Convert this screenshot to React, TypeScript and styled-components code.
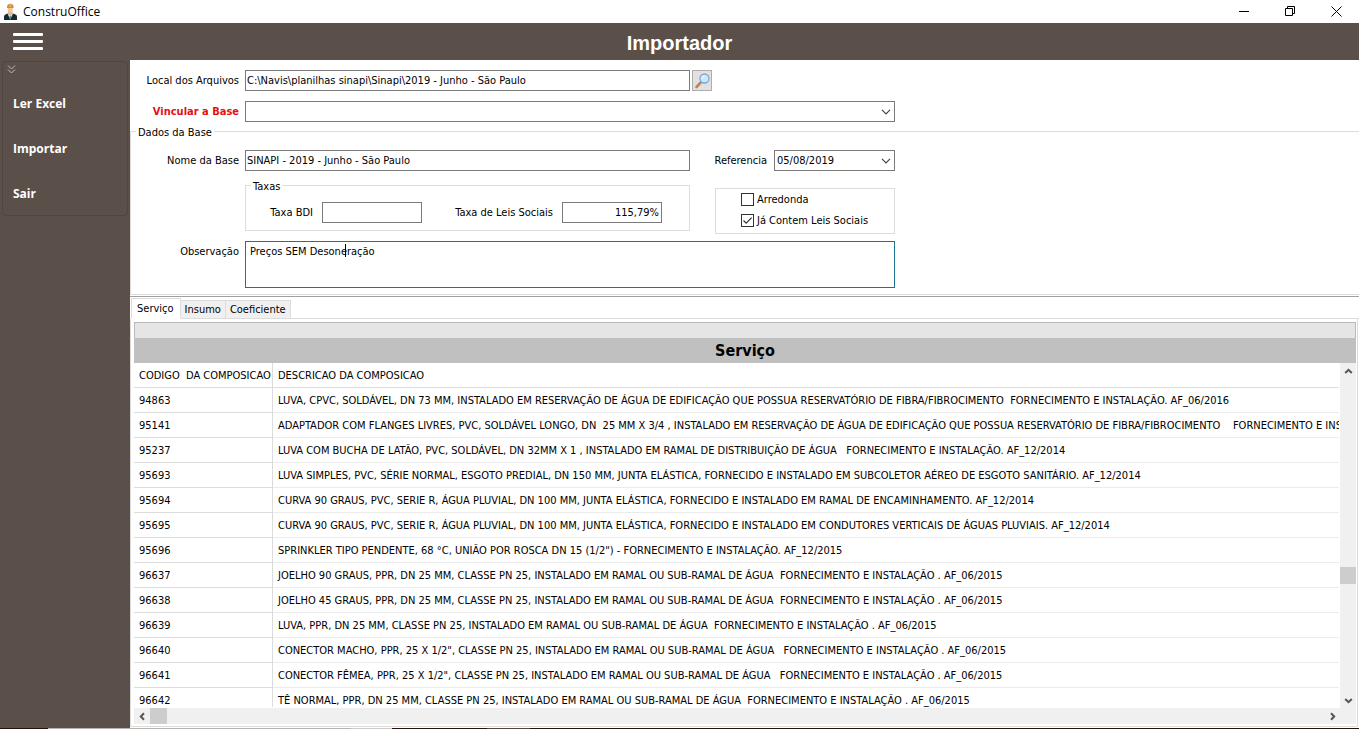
import React from "react";
import styled, { createGlobalStyle } from "styled-components";

const ui = `"DejaVu Sans Condensed", "DejaVu Sans", sans-serif`;
const system = `"Open Sans", "Noto Sans", sans-serif`;
const brown = "#5b4f4a";
const line = "#dcdcdc";

const Global = createGlobalStyle`
  *, *::before, *::after { box-sizing: border-box; }
  body { margin: 0; background: #fff; color: #000; font: 11px/14px ${ui}; }
  button, input, select, textarea { font: inherit; color: inherit; margin: 0; border-radius: 0; outline: none; }
`;

const Window = styled.div`
  display: flex;
  flex-direction: column;
  height: 100vh;
  overflow: hidden;
`;

const TitleBar = styled.header`
  display: flex;
  align-items: center;
  height: 23px;
  flex: none;
  padding-left: 2px;
  font: 12px/16px ${system};
`;

const AppName = styled.span`
  flex: 1;
  padding-left: 5px;
`;

const WindowButton = styled.button`
  display: grid;
  place-items: center;
  width: 46px;
  height: 21px;
  padding: 0;
  border: 0;
  background: none;
`;

const AppHeader = styled.div`
  display: grid;
  grid-template-columns: 130px 1fr 130px;
  align-items: center;
  height: 37px;
  flex: none;
  background: ${brown};
  color: #fff;
`;

const MenuButton = styled.button`
  width: 30px;
  height: 18px;
  margin-left: 13px;
  padding: 0;
  border: 0;
  background: none;
  svg { display: block; }
`;

const PageTitle = styled.h1`
  margin: 0;
  padding-top: 2px;
  text-align: center;
  font: bold 20px/24px "Liberation Sans", Arial, sans-serif;
`;

const Body = styled.div`
  display: flex;
  flex: 1;
  min-height: 0;
`;

const Sidebar = styled.aside`
  width: 130px;
  flex: none;
  padding: 1px 2px;
  background: ${brown};
`;

const SideNav = styled.nav`
  display: flex;
  flex-direction: column;
  height: 155px;
  padding: 3px 0 0 4px;
  border: 1px solid #50453f;
  border-radius: 4px;
`;

const Collapse = styled.button`
  width: 10px;
  height: 10px;
  padding: 0;
  border: 0;
  background: none;
  svg { display: block; }
`;

const NavItem = styled.button`
  height: 45px;
  padding: 0 0 0 6px;
  border: 0;
  background: none;
  color: #fff;
  text-align: left;
  font: bold 12px/16px ${system};
`;

const NavList = styled.div`
  display: flex;
  flex-direction: column;
  padding-top: 7px;
`;

const Main = styled.main`
  display: flex;
  flex-direction: column;
  flex: 1;
  min-width: 0;
`;

const Form = styled.form`
  display: flex;
  flex-direction: column;
  flex: none;
  padding-top: 10px;
`;

const Row = styled.div<{ $top?: number; $align?: string }>`
  display: grid;
  grid-template-columns: 109px 650px;
  column-gap: 6px;
  align-items: ${(p) => p.$align ?? "center"};
  margin-top: ${(p) => p.$top ?? 0}px;
`;

const Label = styled.label<{ $required?: boolean; $multiline?: boolean }>`
  padding-top: ${(p) => (p.$multiline ? 4 : 0)}px;
  text-align: right;
  white-space: nowrap;
  color: ${(p) => (p.$required ? "#e60f0f" : "inherit")};
  font-weight: ${(p) => (p.$required ? "bold" : "normal")};
`;

const Field = styled.div<{ $gap?: number; $align?: string }>`
  display: flex;
  align-items: ${(p) => p.$align ?? "center"};
  gap: ${(p) => p.$gap ?? 0}px;
`;

const TextInput = styled.input<{ $width: number; $right?: boolean }>`
  width: ${(p) => p.$width}px;
  height: 21px;
  padding: ${(p) => (p.$right ? "0 2px" : "0 1px")};
  border: 1px solid #7a7a7a;
  background: #fff;
  text-align: ${(p) => (p.$right ? "right" : "left")};
`;

const SearchButton = styled.button`
  display: grid;
  place-items: center;
  width: 20px;
  height: 21px;
  padding: 0;
  border: 1px solid #adadad;
  background: #e1e1e1;
`;

const SelectBox = styled.div<{ $width: number }>`
  display: grid;
  align-items: center;
  width: ${(p) => p.$width}px;
  > * { grid-area: 1 / 1; }
  svg { justify-self: end; margin-right: 4px; pointer-events: none; }
`;

const Select = styled.select`
  appearance: none;
  width: 100%;
  height: 21px;
  padding: 0 2px;
  border: 1px solid #7a7a7a;
  background: #fff;
`;

const Legend = styled.legend`
  margin-left: 5px;
  padding: 2px 2px 0;
  line-height: 11px;
`;

const BaseGroup = styled.fieldset`
  min-width: 0;
  margin: 3px 0 0;
  padding: 12px 0 6px;
  border: 1px solid ${line};
  border-right: 0;
  & > div { margin-left: -1px; }
`;

const RateGroup = styled.fieldset`
  display: flex;
  width: 445px;
  margin: 0;
  padding: 10px 0 7px;
  border: 1px solid ${line};
`;

const Pair = styled.div<{ $label: number; $gap?: number }>`
  display: grid;
  grid-template-columns: ${(p) => p.$label}px auto;
  column-gap: ${(p) => p.$gap ?? 9}px;
  align-items: center;
`;

const Options = styled.div`
  display: flex;
  flex-direction: column;
  gap: 7px;
  width: 180px;
  height: 46px;
  margin-top: 9px;
  padding: 4px 0 0 25px;
  border: 1px solid ${line};
`;

const Option = styled.label`
  display: flex;
  align-items: flex-start;
  gap: 3px;
  height: 14px;
`;

const CheckBox = styled.input`
  appearance: none;
  width: 13px;
  height: 13px;
  border: 1px solid #333;
  background: #fff;
  &:checked {
    background: url("data:image/svg+xml,%3Csvg xmlns='http://www.w3.org/2000/svg' viewBox='0 0 11 11'%3E%3Cpath d='M1.5 5.5 4.2 8.2 9.6 2.6' fill='none' stroke='%23333' stroke-width='1.2'/%3E%3C/svg%3E");
  }
`;

const NoteBox = styled.div`
  position: relative;
  height: 47px;
`;

const Note = styled.textarea`
  display: block;
  width: 100%;
  height: 100%;
  padding: 3px 4px;
  border: 1px solid #1a7595;
  background: #fff;
  resize: none;
`;

const TextCursor = styled.span`
  position: absolute;
  left: 100px;
  top: 3px;
  width: 1px;
  height: 13px;
  background: #000;
`;

const Splitter = styled.div`
  flex: none;
  height: 2px;
  margin-top: 1px;
  border-top: 1px solid #a0a0a0;
`;

const Tabs = styled.div`
  display: flex;
  align-items: flex-end;
  flex: none;
  height: 21px;
  padding-left: 1px;
`;

const Tab = styled.button<{ $active?: boolean }>`
  height: ${(p) => (p.$active ? 21 : 19)}px;
  padding: ${(p) => (p.$active ? "0 6px 0 5px" : "1px 4px 0")};
  border: 1px solid ${line};
  border-left-width: ${(p) => (p.$active ? 1 : 0)}px;
  border-bottom-color: ${(p) => (p.$active ? "#fff" : line)};
  background: ${(p) => (p.$active ? "#fff" : "#f0f0f0")};
`;

const TabLine = styled.div`
  flex: 1;
  align-self: stretch;
  border-bottom: 1px solid ${line};
`;

const TabPanel = styled.section`
  display: flex;
  flex-direction: column;
  flex: 1;
  min-height: 0;
  margin: 0 1px 1px 0;
  padding: 3px 1px 2px 3px;
  border: 1px solid ${line};
  border-top: 0;
`;

const GroupBar = styled.div`
  flex: none;
  height: 16px;
  border: 1px solid #b9b9b9;
  border-bottom: 0;
  background: #e5e5e5;
`;

const GridTitle = styled.h2`
  flex: none;
  margin: 0;
  background: #c0c0c0;
  text-align: center;
  font: bold 16px/25px ${ui};
`;

const GridArea = styled.div`
  display: grid;
  grid-template: minmax(0, 1fr) 16px / minmax(0, 1fr) 16px;
  flex: 1;
  min-height: 0;
`;

const Viewport = styled.div`
  overflow: hidden;
  margin: 0 1px 1px 0;
`;

const Table = styled.table`
  width: 100%;
  table-layout: fixed;
  border-collapse: separate;
  border-spacing: 0;
  th, td {
    height: 25px;
    padding: 2px 0 0 5px;
    border-bottom: 1px solid #ebebeb;
    font-weight: normal;
    text-align: left;
    white-space: pre;
    overflow: hidden;
  }
  th, td:first-child { border-bottom-color: ${line}; }
  th:first-child, td:first-child { width: 139px; border-right: 1px solid ${line}; }
`;

const ScrollBar = styled.div<{ $vertical?: boolean }>`
  display: flex;
  flex-direction: ${(p) => (p.$vertical ? "column" : "row")};
  background: #f0f0f0;
`;

const ScrollButton = styled.button`
  display: grid;
  place-items: center;
  width: 16px;
  height: 16px;
  flex: none;
  padding: 0;
  border: 0;
  background: none;
`;

const Track = styled.div<{ $grow: number }>`
  flex: ${(p) => p.$grow} 0 0;
`;

const Thumb = styled.div`
  flex: 0 0 17px;
  background: #cdcdcd;
`;

const Corner = styled.div`
  background: #f0f0f0;
`;

const DesktopEdge = styled.div`
  flex: none;
  height: 1px;
  background: linear-gradient(
    to right,
    #2a100a 48px, #b8b2b0 48px 351px, #cfcac8 351px 392px,
    #2a100a 392px 487px, #5a4338 487px 530px, #2a100a 530px
  );
`;

const Chevron = () => (
  <svg width="10" height="6" viewBox="0 0 10 6" aria-hidden="true">
    <path d="M1 .8 5 4.8 9 .8" fill="none" stroke="#444" strokeWidth="1.2" />
  </svg>
);

const Arrow = ({ turn }: { turn: number }) => (
  <svg width="9" height="9" viewBox="0 0 9 9" aria-hidden="true">
    <path d="M1.2 6 4.5 2.8 7.8 6" fill="none" stroke="#555" strokeWidth="2" transform={`rotate(${turn} 4.5 4.5)`} />
  </svg>
);

const rows: [string, string][] = [
  ["94863", "LUVA, CPVC, SOLDÁVEL, DN 73 MM, INSTALADO EM RESERVAÇÃO DE ÁGUA DE EDIFICAÇÃO QUE POSSUA RESERVATÓRIO DE FIBRA/FIBROCIMENTO  FORNECIMENTO E INSTALAÇÃO. AF_06/2016"],
  ["95141", "ADAPTADOR COM FLANGES LIVRES, PVC, SOLDÁVEL LONGO, DN  25 MM X 3/4 , INSTALADO EM RESERVAÇÃO DE ÁGUA DE EDIFICAÇÃO QUE POSSUA RESERVATÓRIO DE FIBRA/FIBROCIMENTO    FORNECIMENTO E INSTALAÇÃO"],
  ["95237", "LUVA COM BUCHA DE LATÃO, PVC, SOLDÁVEL, DN 32MM X 1 , INSTALADO EM RAMAL DE DISTRIBUIÇÃO DE ÁGUA   FORNECIMENTO E INSTALAÇÃO. AF_12/2014"],
  ["95693", "LUVA SIMPLES, PVC, SÉRIE NORMAL, ESGOTO PREDIAL, DN 150 MM, JUNTA ELÁSTICA, FORNECIDO E INSTALADO EM SUBCOLETOR AÉREO DE ESGOTO SANITÁRIO. AF_12/2014"],
  ["95694", "CURVA 90 GRAUS, PVC, SERIE R, ÁGUA PLUVIAL, DN 100 MM, JUNTA ELÁSTICA, FORNECIDO E INSTALADO EM RAMAL DE ENCAMINHAMENTO. AF_12/2014"],
  ["95695", "CURVA 90 GRAUS, PVC, SERIE R, ÁGUA PLUVIAL, DN 100 MM, JUNTA ELÁSTICA, FORNECIDO E INSTALADO EM CONDUTORES VERTICAIS DE ÁGUAS PLUVIAIS. AF_12/2014"],
  ["95696", "SPRINKLER TIPO PENDENTE, 68 °C, UNIÃO POR ROSCA DN 15 (1/2\") - FORNECIMENTO E INSTALAÇÃO. AF_12/2015"],
  ["96637", "JOELHO 90 GRAUS, PPR, DN 25 MM, CLASSE PN 25, INSTALADO EM RAMAL OU SUB-RAMAL DE ÁGUA  FORNECIMENTO E INSTALAÇÃO . AF_06/2015"],
  ["96638", "JOELHO 45 GRAUS, PPR, DN 25 MM, CLASSE PN 25, INSTALADO EM RAMAL OU SUB-RAMAL DE ÁGUA  FORNECIMENTO E INSTALAÇÃO . AF_06/2015"],
  ["96639", "LUVA, PPR, DN 25 MM, CLASSE PN 25, INSTALADO EM RAMAL OU SUB-RAMAL DE ÁGUA  FORNECIMENTO E INSTALAÇÃO . AF_06/2015"],
  ["96640", "CONECTOR MACHO, PPR, 25 X 1/2\", CLASSE PN 25, INSTALADO EM RAMAL OU SUB-RAMAL DE ÁGUA   FORNECIMENTO E INSTALAÇÃO . AF_06/2015"],
  ["96641", "CONECTOR FÊMEA, PPR, 25 X 1/2\", CLASSE PN 25, INSTALADO EM RAMAL OU SUB-RAMAL DE ÁGUA   FORNECIMENTO E INSTALAÇÃO . AF_06/2015"],
  ["96642", "TÊ NORMAL, PPR, DN 25 MM, CLASSE PN 25, INSTALADO EM RAMAL OU SUB-RAMAL DE ÁGUA  FORNECIMENTO E INSTALAÇÃO . AF_06/2015"],
];

export default function App() {
  return (
    <Window>
      <Global />
      <TitleBar>
        <svg width="16" height="18" viewBox="0 0 16 18" aria-hidden="true">
          <path d="M2 17v-3.500c0-1.500 1.500-2.500 4-3h4.500c3 .5 4.500 1.500 4.500 3V17z" fill="#1a2a2b" />
          <path d="M6 8h4.500v3l-2.200 2.500L6 11z" fill="#e9b98b" />
          <path d="m5.500 10.500 2.700 6 2.800-6-2.800 2.200z" fill="#e6f0f0" />
          <path d="m8.200 12.500-.9 1.500.9 3 .9-3z" fill="#2d7f86" />
          <path d="M5.800 4.500h5v2.300c0 1.600-1 2.700-2.500 2.700S5.800 8.400 5.800 6.800z" fill="#f1c79c" />
          <path d="M5 5c-.2-3 1.200-4.300 3.300-4.300S11.800 2 11.600 5z" fill="#d58a35" />
          <path d="M7.500.8h1.600V4H7.500z" fill="#efb262" />
        </svg>
        <AppName>ConstruOffice</AppName>
        <WindowButton aria-label="Minimizar">
          <svg width="11" height="11"><path d="M0 5.500h10" stroke="#000" /></svg>
        </WindowButton>
        <WindowButton aria-label="Restaurar">
          <svg width="11" height="11" fill="none" stroke="#000"><path d="M.5 2.500h7v7h-7zM2.500 2.500v-2h7v7h-2" /></svg>
        </WindowButton>
        <WindowButton aria-label="Fechar">
          <svg width="11" height="11"><path d="m.5.5 10 10m0-10-10 10" stroke="#000" /></svg>
        </WindowButton>
      </TitleBar>

      <AppHeader>
        <MenuButton aria-label="Menu">
          <svg width="30" height="18" fill="#fff">
            <rect width="30" height="3" y="0" rx="1" />
            <rect width="30" height="3" y="7" rx="1" />
            <rect width="30" height="3" y="14" rx="1" />
          </svg>
        </MenuButton>
        <PageTitle>Importador</PageTitle>
      </AppHeader>

      <Body>
        <Sidebar>
          <SideNav>
            <Collapse aria-label="Recolher">
              <svg width="9" height="9" fill="none" stroke="#c4beba"><path d="m1 .5 3.500 3.500L8 .5M1 4.500 4.500 8 8 4.500" /></svg>
            </Collapse>
            <NavList>
              <NavItem>Ler Excel</NavItem>
              <NavItem>Importar</NavItem>
              <NavItem>Sair</NavItem>
            </NavList>
          </SideNav>
        </Sidebar>

        <Main>
          <Form>
            <Row>
              <Label htmlFor="path">Local dos Arquivos</Label>
              <Field $gap={2}>
                <TextInput id="path" $width={445} defaultValue={"C:\\Navis\\planilhas sinapi\\Sinapi\\2019 - Junho - São Paulo"} />
                <SearchButton type="button" aria-label="Procurar">
                  <svg width="16" height="17" viewBox="0 0 16 17">
                    <path d="m2.500 15 3.800-4" stroke="#c9824a" strokeWidth="2.600" strokeLinecap="round" />
                    <path d="m6 11 1.500-1.500" stroke="#7d8aa5" strokeWidth="1.500" />
                    <circle cx="10.500" cy="6.500" r="4.500" fill="#c4ecfb" stroke="#86a3d0" strokeWidth="1.300" />
                    <path d="M8 6.500A2.500 2.500 0 0 1 10.500 4" stroke="#fff" fill="none" />
                  </svg>
                </SearchButton>
              </Field>
            </Row>
            <Row $top={10}>
              <Label htmlFor="base" $required>Vincular a Base</Label>
              <SelectBox $width={650}>
                <Select id="base"><option></option></Select>
                <Chevron />
              </SelectBox>
            </Row>
            <BaseGroup>
              <Legend>Dados da Base</Legend>
              <Row>
                <Label htmlFor="name">Nome da Base</Label>
                <Field>
                  <TextInput id="name" $width={445} defaultValue="SINAPI - 2019 - Junho - São Paulo" />
                  <Pair $label={77} $gap={7}>
                    <Label htmlFor="date">Referencia</Label>
                    <SelectBox $width={121}>
                      <Select id="date"><option>05/08/2019</option></Select>
                      <Chevron />
                    </SelectBox>
                  </Pair>
                </Field>
              </Row>
              <Row $top={8}>
                <span />
                <Field $gap={25} $align="flex-start">
                  <RateGroup>
                    <Legend>Taxas</Legend>
                    <Pair $label={67}>
                      <Label htmlFor="bdi">Taxa BDI</Label>
                      <TextInput id="bdi" $width={100} />
                    </Pair>
                    <Pair $label={131}>
                      <Label htmlFor="social">Taxa de Leis Sociais</Label>
                      <TextInput id="social" $width={100} $right defaultValue="115,79%" />
                    </Pair>
                  </RateGroup>
                  <Options>
                    <Option><CheckBox type="checkbox" />Arredonda</Option>
                    <Option><CheckBox type="checkbox" defaultChecked />Já Contem Leis Sociais</Option>
                  </Options>
                </Field>
              </Row>
              <Row $top={7} $align="start">
                <Label htmlFor="note" $multiline>Observação</Label>
                <NoteBox>
                  <Note id="note" defaultValue="Preços SEM Desoneração" />
                  <TextCursor />
                </NoteBox>
              </Row>
            </BaseGroup>
          </Form>
          <Splitter />
          <Tabs role="tablist">
            <Tab role="tab" $active>Serviço</Tab>
            <Tab role="tab">Insumo</Tab>
            <Tab role="tab">Coeficiente</Tab>
            <TabLine />
          </Tabs>
          <TabPanel>
            <GroupBar />
            <GridTitle>Serviço</GridTitle>
            <GridArea>
              <Viewport>
                <Table>
                  <thead>
                    <tr><th>CODIGO  DA COMPOSICAO</th><th>DESCRICAO DA COMPOSICAO</th></tr>
                  </thead>
                  <tbody>
                    {rows.map(([code, text]) => (
                      <tr key={code}><td>{code}</td><td>{text}</td></tr>
                    ))}
                  </tbody>
                </Table>
              </Viewport>
              <ScrollBar $vertical>
                <ScrollButton aria-label="Subir"><Arrow turn={0} /></ScrollButton>
                <Track $grow={188} />
                <Thumb />
                <Track $grow={108} />
                <ScrollButton aria-label="Descer"><Arrow turn={180} /></ScrollButton>
              </ScrollBar>
              <ScrollBar>
                <ScrollButton aria-label="Esquerda"><Arrow turn={270} /></ScrollButton>
                <Thumb />
                <Track $grow={1} />
                <ScrollButton aria-label="Direita"><Arrow turn={90} /></ScrollButton>
              </ScrollBar>
              <Corner />
            </GridArea>
          </TabPanel>
        </Main>
      </Body>
      <DesktopEdge />
    </Window>
  );
}
